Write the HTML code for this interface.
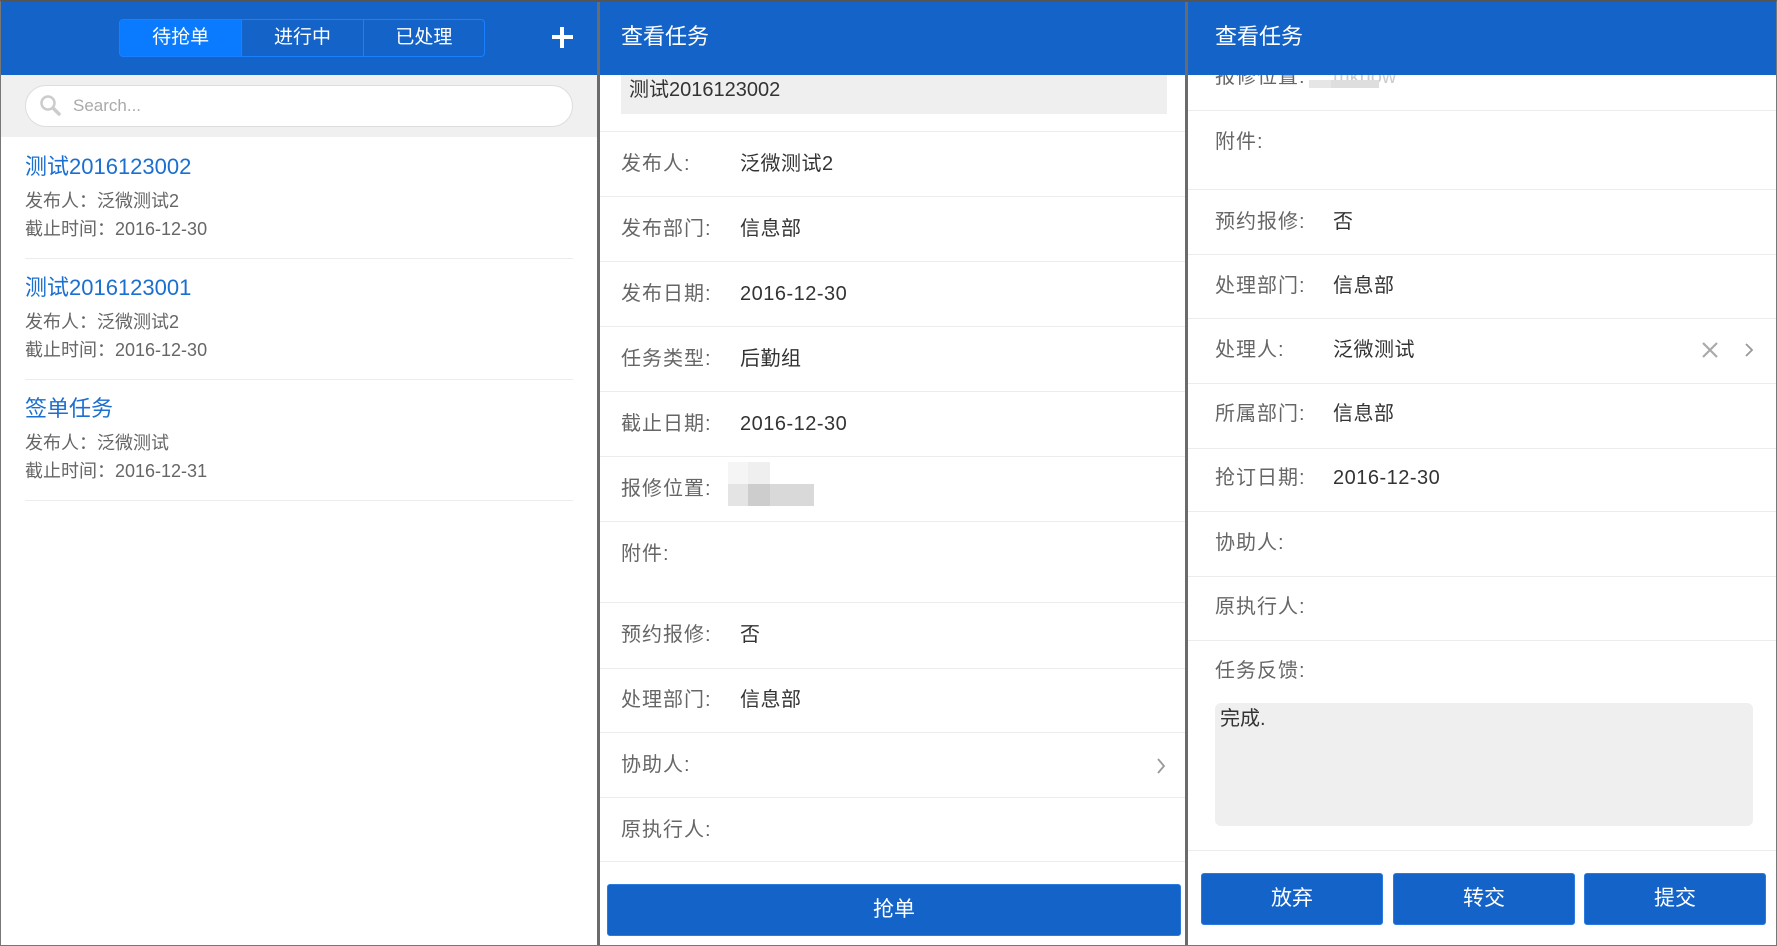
<!DOCTYPE html>
<html><head><meta charset="utf-8"><style>
*{margin:0;padding:0;box-sizing:border-box}
body{width:1777px;height:946px;position:relative;overflow:hidden;background:#fff;font-family:"Liberation Sans","Noto Sans CJK SC",sans-serif}
.a{position:absolute}
.hd{background:#1463c9;height:75px;top:0}
.t{position:absolute;white-space:nowrap;line-height:1}
.lab{color:#666;font-size:20px;letter-spacing:1px}
.val{color:#333;font-size:20px;letter-spacing:.5px}
.sep{position:absolute;height:1px;background:#ececec}
.btn{position:absolute;background:#1463c9;border:1px solid #2a7ae0;border-radius:3px;color:#fff;font-size:21px;text-align:center}
</style></head><body>
<!-- panel 1 -->
<div class="a hd" style="left:0;width:597px"></div>
<div class="a" style="left:119px;top:19px;width:366px;height:38px;border:1px solid #1a80ff;border-radius:4px;overflow:hidden;display:flex">
<div style="width:122px;background:#0a7bff;color:#fff;font-size:19px;text-align:center;line-height:36px">待抢单</div>
<div style="width:122px;border-left:1px solid #1a80ff;color:#fff;font-size:19px;text-align:center;line-height:36px">进行中</div>
<div style="width:122px;border-left:1px solid #1a80ff;color:#fff;font-size:19px;text-align:center;line-height:36px">已处理</div>
</div>
<div class="a" style="left:552px;top:35px;width:21px;height:4px;background:#fff"></div>
<div class="a" style="left:560px;top:27px;width:4px;height:21px;background:#fff"></div>
<div class="a" style="left:0;top:75px;width:597px;height:62px;background:#f0f0f0"></div>
<div class="a" style="left:25px;top:85px;width:548px;height:42px;background:#fff;border:1px solid #ddd;border-radius:21px"></div>
<svg class="a" style="left:39px;top:94px" width="24" height="24" viewBox="0 0 24 24"><circle cx="9" cy="9" r="6.5" fill="none" stroke="#ccc" stroke-width="2.5"/><path d="M14 14l6 6" stroke="#ccc" stroke-width="3.5" stroke-linecap="round"/></svg>
<div class="t" style="left:73px;top:97px;font-size:17px;color:#aaa">Search...</div>
<div class="t" style="left:25px;top:156px;font-size:22px;color:#1a6fd0">测试2016123002</div>
<div class="t" style="left:25px;top:192px;font-size:18px;color:#666">发布人：泛微测试2</div>
<div class="t" style="left:25px;top:220px;font-size:18px;color:#666">截止时间：2016-12-30</div>
<div class="sep" style="left:25px;top:258px;width:548px"></div>
<div class="t" style="left:25px;top:277px;font-size:22px;color:#1a6fd0">测试2016123001</div>
<div class="t" style="left:25px;top:313px;font-size:18px;color:#666">发布人：泛微测试2</div>
<div class="t" style="left:25px;top:341px;font-size:18px;color:#666">截止时间：2016-12-30</div>
<div class="sep" style="left:25px;top:379px;width:548px"></div>
<div class="t" style="left:25px;top:398px;font-size:22px;color:#1a6fd0">签单任务</div>
<div class="t" style="left:25px;top:434px;font-size:18px;color:#666">发布人：泛微测试</div>
<div class="t" style="left:25px;top:462px;font-size:18px;color:#666">截止时间：2016-12-31</div>
<div class="sep" style="left:25px;top:500px;width:548px"></div>

<!-- panel 2 -->
<div class="a hd" style="left:600px;width:585px"></div>
<div class="t" style="left:621px;top:26px;font-size:22px;color:#fff">查看任务</div>
<div class="a" style="left:621px;top:75px;width:546px;height:39px;background:#efefef"></div>
<div class="t" style="left:629px;top:80px;font-size:20px;color:#333">测试2016123002</div>
<div class="sep" style="left:600px;top:131px;width:585px"></div>
<div class="t lab" style="left:621px;top:154px">发布人:</div><div class="t val" style="left:740px;top:154px">泛微测试2</div>
<div class="sep" style="left:600px;top:196px;width:585px"></div>
<div class="t lab" style="left:621px;top:219px">发布部门:</div><div class="t val" style="left:740px;top:219px">信息部</div>
<div class="sep" style="left:600px;top:261px;width:585px"></div>
<div class="t lab" style="left:621px;top:284px">发布日期:</div><div class="t val" style="left:740px;top:284px">2016-12-30</div>
<div class="sep" style="left:600px;top:326px;width:585px"></div>
<div class="t lab" style="left:621px;top:349px">任务类型:</div><div class="t val" style="left:740px;top:349px">后勤组</div>
<div class="sep" style="left:600px;top:391px;width:585px"></div>
<div class="t lab" style="left:621px;top:414px">截止日期:</div><div class="t val" style="left:740px;top:414px">2016-12-30</div>
<div class="sep" style="left:600px;top:456px;width:585px"></div>
<div class="t lab" style="left:621px;top:479px">报修位置:</div>
<div class="a" style="left:728px;top:462px;width:20px;height:22px;background:#f5f5f5"></div>
<div class="a" style="left:748px;top:462px;width:22px;height:22px;background:#efefef"></div>
<div class="a" style="left:728px;top:484px;width:20px;height:22px;background:#e4e4e4"></div>
<div class="a" style="left:748px;top:484px;width:22px;height:22px;background:#cdcdcd"></div>
<div class="a" style="left:770px;top:484px;width:44px;height:22px;background:#d9d9d9"></div>
<div class="sep" style="left:600px;top:521px;width:585px"></div>
<div class="t lab" style="left:621px;top:544px">附件:</div>
<div class="sep" style="left:600px;top:602px;width:585px"></div>
<div class="t lab" style="left:621px;top:625px">预约报修:</div><div class="t val" style="left:740px;top:625px">否</div>
<div class="sep" style="left:600px;top:668px;width:585px"></div>
<div class="t lab" style="left:621px;top:690px">处理部门:</div><div class="t val" style="left:740px;top:690px">信息部</div>
<div class="sep" style="left:600px;top:732px;width:585px"></div>
<div class="t lab" style="left:621px;top:755px">协助人:</div>
<svg class="a" style="left:1155px;top:756px" width="12" height="20" viewBox="0 0 12 20"><path d="M3 3l6 7-6 7" fill="none" stroke="#999" stroke-width="1.8"/></svg>
<div class="sep" style="left:600px;top:797px;width:585px"></div>
<div class="t lab" style="left:621px;top:820px">原执行人:</div>
<div class="sep" style="left:600px;top:861px;width:585px"></div>
<div class="btn" style="left:607px;top:884px;width:574px;height:52px;line-height:50px">抢单</div>

<!-- panel 3 -->
<div class="t lab" style="left:1215px;top:67px">报修位置:</div>
<div class="t" style="left:1333px;top:67px;font-size:20px;color:#ccc">mknow</div>
<div class="a" style="left:1309px;top:80px;width:22px;height:8px;background:#e6e6e6"></div>
<div class="a" style="left:1331px;top:80px;width:48px;height:8px;background:#dedede"></div>
<div class="a hd" style="left:1188px;width:589px"></div>
<div class="t" style="left:1215px;top:26px;font-size:22px;color:#fff">查看任务</div>
<div class="sep" style="left:1188px;top:110px;width:589px"></div>
<div class="t lab" style="left:1215px;top:132px">附件:</div>
<div class="sep" style="left:1188px;top:189px;width:589px"></div>
<div class="t lab" style="left:1215px;top:212px">预约报修:</div><div class="t val" style="left:1333px;top:212px">否</div>
<div class="sep" style="left:1188px;top:254px;width:589px"></div>
<div class="t lab" style="left:1215px;top:276px">处理部门:</div><div class="t val" style="left:1333px;top:276px">信息部</div>
<div class="sep" style="left:1188px;top:318px;width:589px"></div>
<div class="t lab" style="left:1215px;top:340px">处理人:</div><div class="t val" style="left:1333px;top:340px">泛微测试</div>
<svg class="a" style="left:1700px;top:340px" width="20" height="20" viewBox="0 0 20 20"><path d="M3 3l14 14M17 3L3 17" stroke="#aaa" stroke-width="2.2"/></svg>
<svg class="a" style="left:1743px;top:341px" width="12" height="18" viewBox="0 0 12 18"><path d="M3 3l6 6-6 6" fill="none" stroke="#999" stroke-width="1.8"/></svg>
<div class="sep" style="left:1188px;top:383px;width:589px"></div>
<div class="t lab" style="left:1215px;top:404px">所属部门:</div><div class="t val" style="left:1333px;top:404px">信息部</div>
<div class="sep" style="left:1188px;top:448px;width:589px"></div>
<div class="t lab" style="left:1215px;top:468px">抢订日期:</div><div class="t val" style="left:1333px;top:468px">2016-12-30</div>
<div class="sep" style="left:1188px;top:511px;width:589px"></div>
<div class="t lab" style="left:1215px;top:533px">协助人:</div>
<div class="sep" style="left:1188px;top:576px;width:589px"></div>
<div class="t lab" style="left:1215px;top:597px">原执行人:</div>
<div class="sep" style="left:1188px;top:640px;width:589px"></div>
<div class="t lab" style="left:1215px;top:661px">任务反馈:</div>
<div class="a" style="left:1215px;top:703px;width:538px;height:123px;background:#efefef;border-radius:6px"></div>
<div class="t" style="left:1220px;top:709px;font-size:20px;color:#333">完成.</div>
<div class="sep" style="left:1188px;top:850px;width:589px"></div>
<div class="btn" style="left:1201px;top:873px;width:182px;height:52px;line-height:50px">放弃</div>
<div class="btn" style="left:1393px;top:873px;width:182px;height:52px;line-height:50px">转交</div>
<div class="btn" style="left:1584px;top:873px;width:182px;height:52px;line-height:50px">提交</div>

<!-- frame -->
<div class="a" style="left:597px;top:0;width:3px;height:946px;background:#6b6b6b"></div>
<div class="a" style="left:1185px;top:0;width:3px;height:946px;background:#6b6b6b"></div>
<div class="a" style="left:0;top:0;width:1777px;height:946px;border:1px solid #777;border-top:2px solid #555"></div>
</body></html>
